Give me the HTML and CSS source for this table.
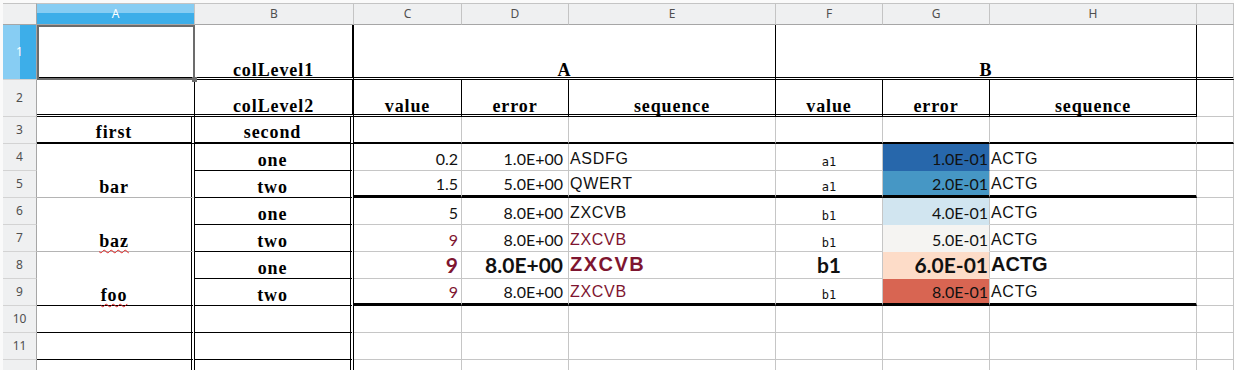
FILE: index.html
```html
<!DOCTYPE html>
<html>
<head>
<meta charset="utf-8">
<link rel="stylesheet" href="styles.css">
</head>
<body>
<div class="sheet">
  <!-- column headers -->
  <div class="corner"></div>
  <div class="ch sel">A</div>
  <div class="ch">B</div>
  <div class="ch">C</div>
  <div class="ch">D</div>
  <div class="ch">E</div>
  <div class="ch">F</div>
  <div class="ch">G</div>
  <div class="ch">H</div>
  <div class="ch"></div>

  <!-- row 1 -->
  <div class="rh rsel">1</div>
  <div class="c selcell"></div>
  <div class="c h vr2 bdbl">colLevel1</div>
  <div class="c h vr bdbl span3">A</div>
  <div class="c h vr bdbl span3">B</div>
  <div class="c bdbl"></div>

  <!-- row 2 -->
  <div class="rh">2</div>
  <div class="c vr bdbl"></div>
  <div class="c h h2 vr2 bdbl">colLevel2</div>
  <div class="c h h2 vr bdbl">value</div>
  <div class="c h h2 vr bdbl">error</div>
  <div class="c h h2 vr bdbl">sequence</div>
  <div class="c h h2 vr bdbl">value</div>
  <div class="c h h2 vr bdbl">error</div>
  <div class="c h h2 vr bdbl">sequence</div>
  <div class="c"></div>

  <!-- row 3 -->
  <div class="rh">3</div>
  <div class="c h h3 vdbl bb2">first</div>
  <div class="c h h3 vdbl bb2">second</div>
  <div class="c bb2"></div>
  <div class="c bb2"></div>
  <div class="c bb2"></div>
  <div class="c bb2"></div>
  <div class="c bb2"></div>
  <div class="c bb2"></div>
  <div class="c bb2"></div>

  <!-- row 4 -->
  <div class="rh">4</div>
  <div class="c h hb vdbl span2r bgray">bar</div>
  <div class="c h hb vdbl bb">one</div>
  <div class="c num">0.2</div>
  <div class="c num pd">1.0E+00</div>
  <div class="c str">ASDFG</div>
  <div class="c mono">a1</div>
  <div class="c num pg g1">1.0E-01</div>
  <div class="c str">ACTG</div>
  <div class="c"></div>

  <!-- row 5 -->
  <div class="rh">5</div>
  <div class="c h hb vdbl bb">two</div>
  <div class="c num bb3">1.5</div>
  <div class="c num pd bb3">5.0E+00</div>
  <div class="c str bb3">QWERT</div>
  <div class="c mono bb3">a1</div>
  <div class="c num pg g2 bb3">2.0E-01</div>
  <div class="c str bb3">ACTG</div>
  <div class="c"></div>

  <!-- row 6 -->
  <div class="rh">6</div>
  <div class="c h hb vdbl span2r bgray"><span class="spell">baz</span></div>
  <div class="c h hb vdbl bb">one</div>
  <div class="c num">5</div>
  <div class="c num pd">8.0E+00</div>
  <div class="c str">ZXCVB</div>
  <div class="c mono">b1</div>
  <div class="c num pg g3">4.0E-01</div>
  <div class="c str">ACTG</div>
  <div class="c"></div>

  <!-- row 7 -->
  <div class="rh">7</div>
  <div class="c h hb vdbl bb">two</div>
  <div class="c num red">9</div>
  <div class="c num pd">8.0E+00</div>
  <div class="c str red">ZXCVB</div>
  <div class="c mono">b1</div>
  <div class="c num pg g4">5.0E-01</div>
  <div class="c str">ACTG</div>
  <div class="c"></div>

  <!-- row 8 -->
  <div class="rh">8</div>
  <div class="c h hb vdbl span2r bb"><span class="spell">foo</span></div>
  <div class="c h hb vdbl bb">one</div>
  <div class="c num big red">9</div>
  <div class="c num pd big">8.0E+00</div>
  <div class="c str bigs red wide">ZXCVB</div>
  <div class="c monobig">b1</div>
  <div class="c num pg big g5">6.0E-01</div>
  <div class="c str bigs">ACTG</div>
  <div class="c"></div>

  <!-- row 9 -->
  <div class="rh">9</div>
  <div class="c h hb vdbl bb">two</div>
  <div class="c num red bb3">9</div>
  <div class="c num pd bb3">8.0E+00</div>
  <div class="c str red bb3">ZXCVB</div>
  <div class="c mono bb3">b1</div>
  <div class="c num pg g6 bb3">8.0E-01</div>
  <div class="c str bb3">ACTG</div>
  <div class="c"></div>

  <!-- row 10 -->
  <div class="rh">10</div>
  <div class="c vdbl bb"></div>
  <div class="c vdbl bb"></div>
  <div class="c"></div><div class="c"></div><div class="c"></div><div class="c"></div><div class="c"></div><div class="c"></div><div class="c"></div>

  <!-- row 11 -->
  <div class="rh">11</div>
  <div class="c vdbl bb"></div>
  <div class="c vdbl bb"></div>
  <div class="c"></div><div class="c"></div><div class="c"></div><div class="c"></div><div class="c"></div><div class="c"></div><div class="c"></div>

  <!-- row 12 (only its top edge is in view) -->
  <div class="rh"></div>
  <div class="c vdbl"></div>
  <div class="c vdbl"></div>
  <div class="c"></div><div class="c"></div><div class="c"></div><div class="c"></div><div class="c"></div><div class="c"></div><div class="c"></div>
</div>
</body>
</html>
```

FILE: styles.css
```css
html, body {
  margin: 0;
  padding: 0;
  background: #fafafa;
  overflow: hidden;
}

.sheet {
  padding: 3px 0 0 3px;
  display: grid;
  grid-template-columns: 34px 158px 159px 108px 107px 207px 107px 107px 207px 1fr;
  grid-template-rows: 22px 55px 37px repeat(10, 27px);
  align-content: start;
  height: 367px;
  overflow: hidden;
}

.sheet > div {
  box-sizing: border-box;
  min-width: 0;
}

/* headers */
.corner {
  background: #eff0f1;
  border-top: 1px solid #c4c4c4;
  border-right: 1px solid #a6a6a6;
  border-bottom: 1px solid #a6a6a6;
}

.ch {
  background: #eff0f1;
  border-top: 1px solid #c4c4c4;
  border-right: 1px solid #c4c4c4;
  border-bottom: 1px solid #a6a6a6;
  font-family: "Noto Sans", "DejaVu Sans", sans-serif;
  font-size: 12px;
  color: #4f4f4f;
  display: flex;
  align-items: center;
  justify-content: center;
  line-height: 1;
}

.ch.sel {
  background: linear-gradient(to bottom, #87cdf3 0, #87cdf3 9px, #3daee9 9px);
  color: #ffffff;
}

.rh {
  background: #eff0f1;
  border-right: 1px solid #a6a6a6;
  border-bottom: 1px solid #d3d3d3;
  font-family: "Noto Sans", "DejaVu Sans", sans-serif;
  font-size: 12px;
  color: #4f4f4f;
  display: flex;
  align-items: center;
  justify-content: center;
  line-height: 1;
}

.rh.rsel {
  background: linear-gradient(to right, #87cdf3 0, #87cdf3 17px, #3daee9 17px);
  color: #ffffff;
}

/* cells */
.c {
  background: #ffffff;
  border-right: 1px solid #c6c6c6;
  border-bottom: 1px solid #c6c6c6;
  display: flex;
  align-items: flex-end;
  white-space: nowrap;
  overflow: visible;
}

.span3 { grid-column: span 3; }
.span2r { grid-row: span 2; }

.vr { border-right: 1px solid #000; }
.vr2 { border-right: 2px solid #000; }
.vdbl { border-right: 4px double #000; }
.bdbl { border-bottom: 3px double #000; }
.bb { border-bottom: 1px solid #000; }
.bb2 { border-bottom: 2px solid #000; }
.bb3 { border-bottom: 3px solid #000; }
.bgray { border-bottom: 1px solid #b4b4b4; }

.selcell {
  position: relative;
  border-right: 1px solid #000;
  border-bottom: 3px double #000;
}
.selcell::after {
  content: "";
  position: absolute;
  left: 0;
  top: 0;
  right: -1px;
  bottom: -3px;
  border: 2px solid #6c6c6c;
}
.selcell::before {
  content: "";
  position: absolute;
  right: -3px;
  bottom: -5px;
  width: 5px;
  height: 5px;
  background: #6c6c6c;
  z-index: 2;
}

/* header text */
.h {
  justify-content: center;
  font-family: "Liberation Serif", "Times New Roman", serif;
  font-weight: bold;
  font-size: 18px;
  letter-spacing: 0.9px;
  line-height: 14px;
  color: #000;
}
.h2 { padding-bottom: 1px; }
.h3 { padding-bottom: 3px; }
.hb { padding-bottom: 3px; }

.spell {
  position: relative;
  z-index: 1;
  text-decoration: underline wavy #e02020;
  text-decoration-thickness: 1px;
  text-underline-offset: 2px;
  text-decoration-skip-ink: none;
}

/* data text */
.num {
  justify-content: flex-end;
  font-family: Lato, "Liberation Sans", sans-serif;
  font-size: 16px;
  line-height: 14px;
  padding-right: 3px;
  padding-bottom: 4px;
  color: #111;
}
.pd { padding-right: 5px; }
.pg { padding-right: 1px; }

.str {
  justify-content: flex-start;
  font-family: "Liberation Sans", Arial, sans-serif;
  font-size: 16px;
  letter-spacing: 0.7px;
  line-height: 14px;
  padding-left: 1px;
  padding-bottom: 4px;
  color: #111;
}

.mono {
  justify-content: center;
  font-family: "DejaVu Sans Mono", "Liberation Mono", monospace;
  font-size: 12px;
  line-height: 14px;
  padding-bottom: 1px;
  color: #111;
}

.monobig {
  justify-content: center;
  font-family: Lato, "Liberation Sans", sans-serif;
  font-weight: bold;
  font-size: 21px;
  line-height: 14px;
  padding-bottom: 6px;
  color: #111;
}

.big {
  font-weight: bold;
  font-size: 21px;
  padding-bottom: 6px;
}

.bigs {
  font-weight: bold;
  font-size: 20px;
  letter-spacing: 0;
  padding-bottom: 7px;
}
.wide { letter-spacing: 1.5px; }

.red { color: #7e1530; }

/* colour scale */
.g1 { background: #2767ab; border-bottom-color: transparent; }
.g2 { background: #4697c5; }
.g3 { background: #d1e5f0; border-bottom-color: transparent; }
.g4 { background: #f5f4f2; border-bottom-color: transparent; }
.g5 { background: #fddcc8; border-bottom-color: transparent; }
.g6 { background: #d86552; }
```
